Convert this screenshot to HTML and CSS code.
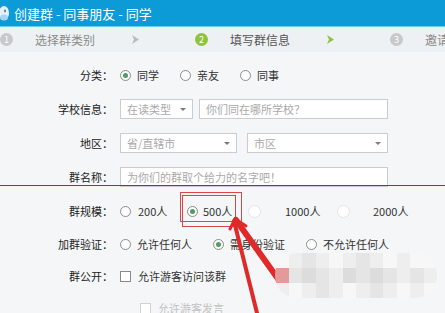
FILE: index.html
```html
<!DOCTYPE html>
<html>

<head>
    <meta charset="utf-8">
    <title>创建群</title>
    <link rel="stylesheet" href="styles.css">
</head>

<body>
    <div class="window">
        <!-- タイトルバー -->
        <div class="titlebar">
            <svg class="logo" viewBox="0 0 12 16">
                <ellipse cx="4" cy="8" rx="5" ry="7" fill="#e6f1f7" />
                <ellipse cx="4" cy="12.5" rx="4" ry="3" fill="#a6d6ee" />
                <ellipse cx="5" cy="6" rx="1" ry="1.4" fill="#5a7d90" />
            </svg>
            <span>创建群 - 同事朋友 - 同学</span>
        </div>

        <!-- ステップ -->
        <div class="steps">
            <div class="step">
                <span class="num">1</span>
                <span class="step-text">选择群类别</span>
                <svg class="arrow" viewBox="0 0 7 9"><path d="M0 0 L7 4.5 L0 9 L2 4.5 Z" fill="#b9bcbf" /></svg>
            </div>
            <div class="step on">
                <span class="num">2</span>
                <span class="step-text">填写群信息</span>
                <svg class="arrow" viewBox="0 0 7 9"><path d="M0 0 L7 4.5 L0 9 L2 4.5 Z" fill="#8cc43c" /></svg>
            </div>
            <div class="step">
                <span class="num">3</span>
                <span class="step-text">邀请群成员</span>
            </div>
        </div>

        <!-- フォーム -->
        <div class="form">
            <div class="row">
                <div class="label">分类：</div>
                <label class="opt"><span class="radio checked"></span>同学</label>
                <label class="opt"><span class="radio"></span>亲友</label>
                <label class="opt"><span class="radio"></span>同事</label>
            </div>
            <div class="row">
                <div class="label">学校信息：</div>
                <div class="field w-type">在读类型<span class="caret"></span></div>
                <div class="field w-school">你们同在哪所学校？</div>
            </div>
            <div class="row">
                <div class="label">地区：</div>
                <div class="field w-prov">省/直辖市<span class="caret"></span></div>
                <div class="field w-city">市区<span class="caret"></span></div>
            </div>
            <div class="row">
                <div class="label">群名称：</div>
                <div class="field w-name">为你们的群取个给力的名字吧！</div>
            </div>
            <div class="row scale">
                <div class="label">群规模：</div>
                <label class="opt c1"><span class="radio"></span>200人</label>
                <label class="opt c2"><span class="radio checked"></span>500人</label>
                <label class="opt c3"><span class="radio faint"></span>1000人</label>
                <label class="opt c4"><span class="radio faint"></span>2000人</label>
            </div>
            <div class="row short">
                <div class="label">加群验证：</div>
                <label class="opt"><span class="radio"></span>允许任何人</label>
                <label class="opt"><span class="radio checked"></span>需身份验证</label>
                <label class="opt"><span class="radio"></span>不允许任何人</label>
            </div>
            <div class="row short">
                <div class="label">群公开：</div>
                <label class="opt"><span class="check"></span>允许游客访问该群</label>
            </div>
            <div class="row short sub">
                <label class="opt disabled"><span class="check"></span>允许游客发言</label>
            </div>
        </div>

        <!-- 赤い注釈 -->
        <div class="mark-line"></div>
        <div class="mark-box a"></div>
        <div class="mark-box b"></div>
        <svg class="mark-arrow" viewBox="0 0 445 313">
            <path d="M234 221 L257 313" stroke="#e02a2a" stroke-width="4" fill="none" stroke-linecap="round" />
            <path d="M236 220 L281 283" stroke="#e02a2a" stroke-width="6" fill="none" stroke-linecap="round" />
            <path d="M230 229 L235 219 L246 226" stroke="#e02a2a" stroke-width="3" fill="none" stroke-linecap="round" />
        </svg>
        <div class="mosaic">
            <i class="m0"></i><i class="m1"></i><i class="m2"></i><i class="m1"></i><i class="m0"></i><i class="m1"></i>
            <i class="m2"></i><i class="m1"></i><i class="m0"></i><i class="m1"></i><i class="m0"></i><i class="m0"></i>
            <i class="pink"></i><i class="m2"></i><i class="m3"></i><i class="m2"></i><i class="m1"></i><i class="m3"></i>
            <i class="m2"></i><i class="m3"></i><i class="m2"></i><i class="m1"></i><i class="m2"></i><i class="m1"></i>
            <i class="m1"></i><i class="m0"></i><i class="m1"></i><i class="m2"></i><i class="m1"></i><i class="m0"></i>
            <i class="m1"></i><i class="m2"></i><i class="m1"></i><i class="m0"></i><i class="m1"></i><i class="m0"></i>
        </div>
    </div>
</body>

</html>
```

FILE: styles.css
```css
/* 全体 */
body {
    margin: 0;
    font-family: "Noto Sans CJK SC", sans-serif;
}

.window {
    position: relative;
    width: 445px;
    height: 313px;
    overflow: hidden;
    background-color: #f4f6f7;
}

/* タイトルバー */
.titlebar {
    height: 27px;
    box-sizing: border-box;
    background-color: #0c9bd7;
    border-bottom: 1px solid #6ccbf0;
    display: flex;
    align-items: center;
    color: white;
    font-size: 13px;
}

.logo {
    width: 12px;
    height: 16px;
    margin-right: 2px;
}

/* ステップ */
.steps {
    height: 25px;
    display: flex;
    align-items: center;
    background-color: #eef1f3;
    font-size: 12px;
    color: #8a8a8a;
    white-space: nowrap;
}

.step {
    width: 195px;
    flex-shrink: 0;
    display: flex;
    align-items: center;
}

.num {
    width: 13px;
    height: 13px;
    border-radius: 50%;
    background-color: #c6c8ca;
    color: white;
    font-size: 9px;
    display: flex;
    align-items: center;
    justify-content: center;
}

.step.on .num {
    background-color: #8cc43c;
}

.step-text {
    margin-left: 22px;
}

.step.on .step-text {
    color: #555;
}

.arrow {
    width: 7px;
    height: 9px;
    margin-left: auto;
    margin-right: 56px;
}

/* フォーム */
.form {
    padding-top: 6px;
}

.row {
    height: 34px;
    display: flex;
    align-items: center;
    font-size: 11px;
    color: #333;
}

.row.short {
    height: 32px;
}

.row.sub {
    padding-left: 140px;
}

.label {
    width: 113px;
    margin-right: 7px;
    text-align: right;
    color: #222;
}

.opt {
    display: flex;
    align-items: center;
    margin-right: 21px;
    white-space: nowrap;
}

.radio {
    width: 11px;
    height: 11px;
    box-sizing: border-box;
    border: 1px solid #8c8c8c;
    border-radius: 50%;
    background-color: white;
    margin-right: 6px;
    display: flex;
    align-items: center;
    justify-content: center;
}

.radio.checked::after {
    content: "";
    width: 5px;
    height: 5px;
    border-radius: 50%;
    background-color: #4f9b62;
}

.radio.faint {
    width: 13px;
    height: 13px;
    border-color: #e4e4e4;
    margin-right: 24px;
}

/* 群規模の行 */
.scale .opt {
    margin-right: 0;
}

.scale .c1 {
    width: 67px;
}

.scale .c1 .radio {
    margin-right: 7px;
}

.scale .c2 {
    width: 61px;
}

.scale .c2 .radio {
    margin-right: 5px;
}

.scale .c3 {
    width: 89px;
}

.scale .c4 .radio {
    margin-right: 23px;
}

.check {
    width: 11px;
    height: 11px;
    box-sizing: border-box;
    border: 1px solid #8a8a8a;
    background-color: white;
    margin-right: 7px;
}

.opt.disabled {
    color: #c2c2c2;
}

.opt.disabled .check {
    border-color: #d2d2d2;
}

.field {
    height: 20px;
    box-sizing: border-box;
    border: 1px solid #c9cdd1;
    background-color: white;
    display: flex;
    align-items: center;
    justify-content: space-between;
    padding: 0 6px;
    margin-right: 6px;
    color: #a9a9a9;
    white-space: nowrap;
}

.caret {
    width: 0;
    height: 0;
    border-left: 3px solid transparent;
    border-right: 3px solid transparent;
    border-top: 3px solid #7a7a7a;
}

.w-type {
    width: 73px;
}

.w-school {
    width: 189px;
}

.w-prov {
    width: 117px;
    margin-right: 10px;
}

.w-city {
    width: 141px;
}

.w-name {
    width: 268px;
}

/* 赤い注釈 */
.mark-line {
    position: absolute;
    left: 0;
    top: 185px;
    width: 445px;
    height: 1px;
    background-color: #a8282b;
}

.mark-box {
    position: absolute;
    box-sizing: border-box;
    border: 1px solid #d9474a;
}

.mark-box.a {
    left: 180px;
    top: 192px;
    width: 62px;
    height: 30px;
}

.mark-box.b {
    left: 182px;
    top: 195px;
    width: 54px;
    height: 32px;
}

.mark-arrow {
    position: absolute;
    left: 0;
    top: 0;
    width: 445px;
    height: 313px;
}

/* モザイク */
.mosaic {
    position: absolute;
    left: 275px;
    top: 253px;
    width: 162px;
    height: 45px;
    border-radius: 22px;
    overflow: hidden;
    display: grid;
    grid-template-columns: repeat(12, 1fr);
    grid-template-rows: repeat(3, 1fr);
}

.m0 {
    background-color: #f7f7f7;
}

.m1 {
    background-color: #eeeeee;
}

.m2 {
    background-color: #e5e5e5;
}

.m3 {
    background-color: #dcdcdc;
}

.pink {
    background-color: #e39a9a;
}
```
